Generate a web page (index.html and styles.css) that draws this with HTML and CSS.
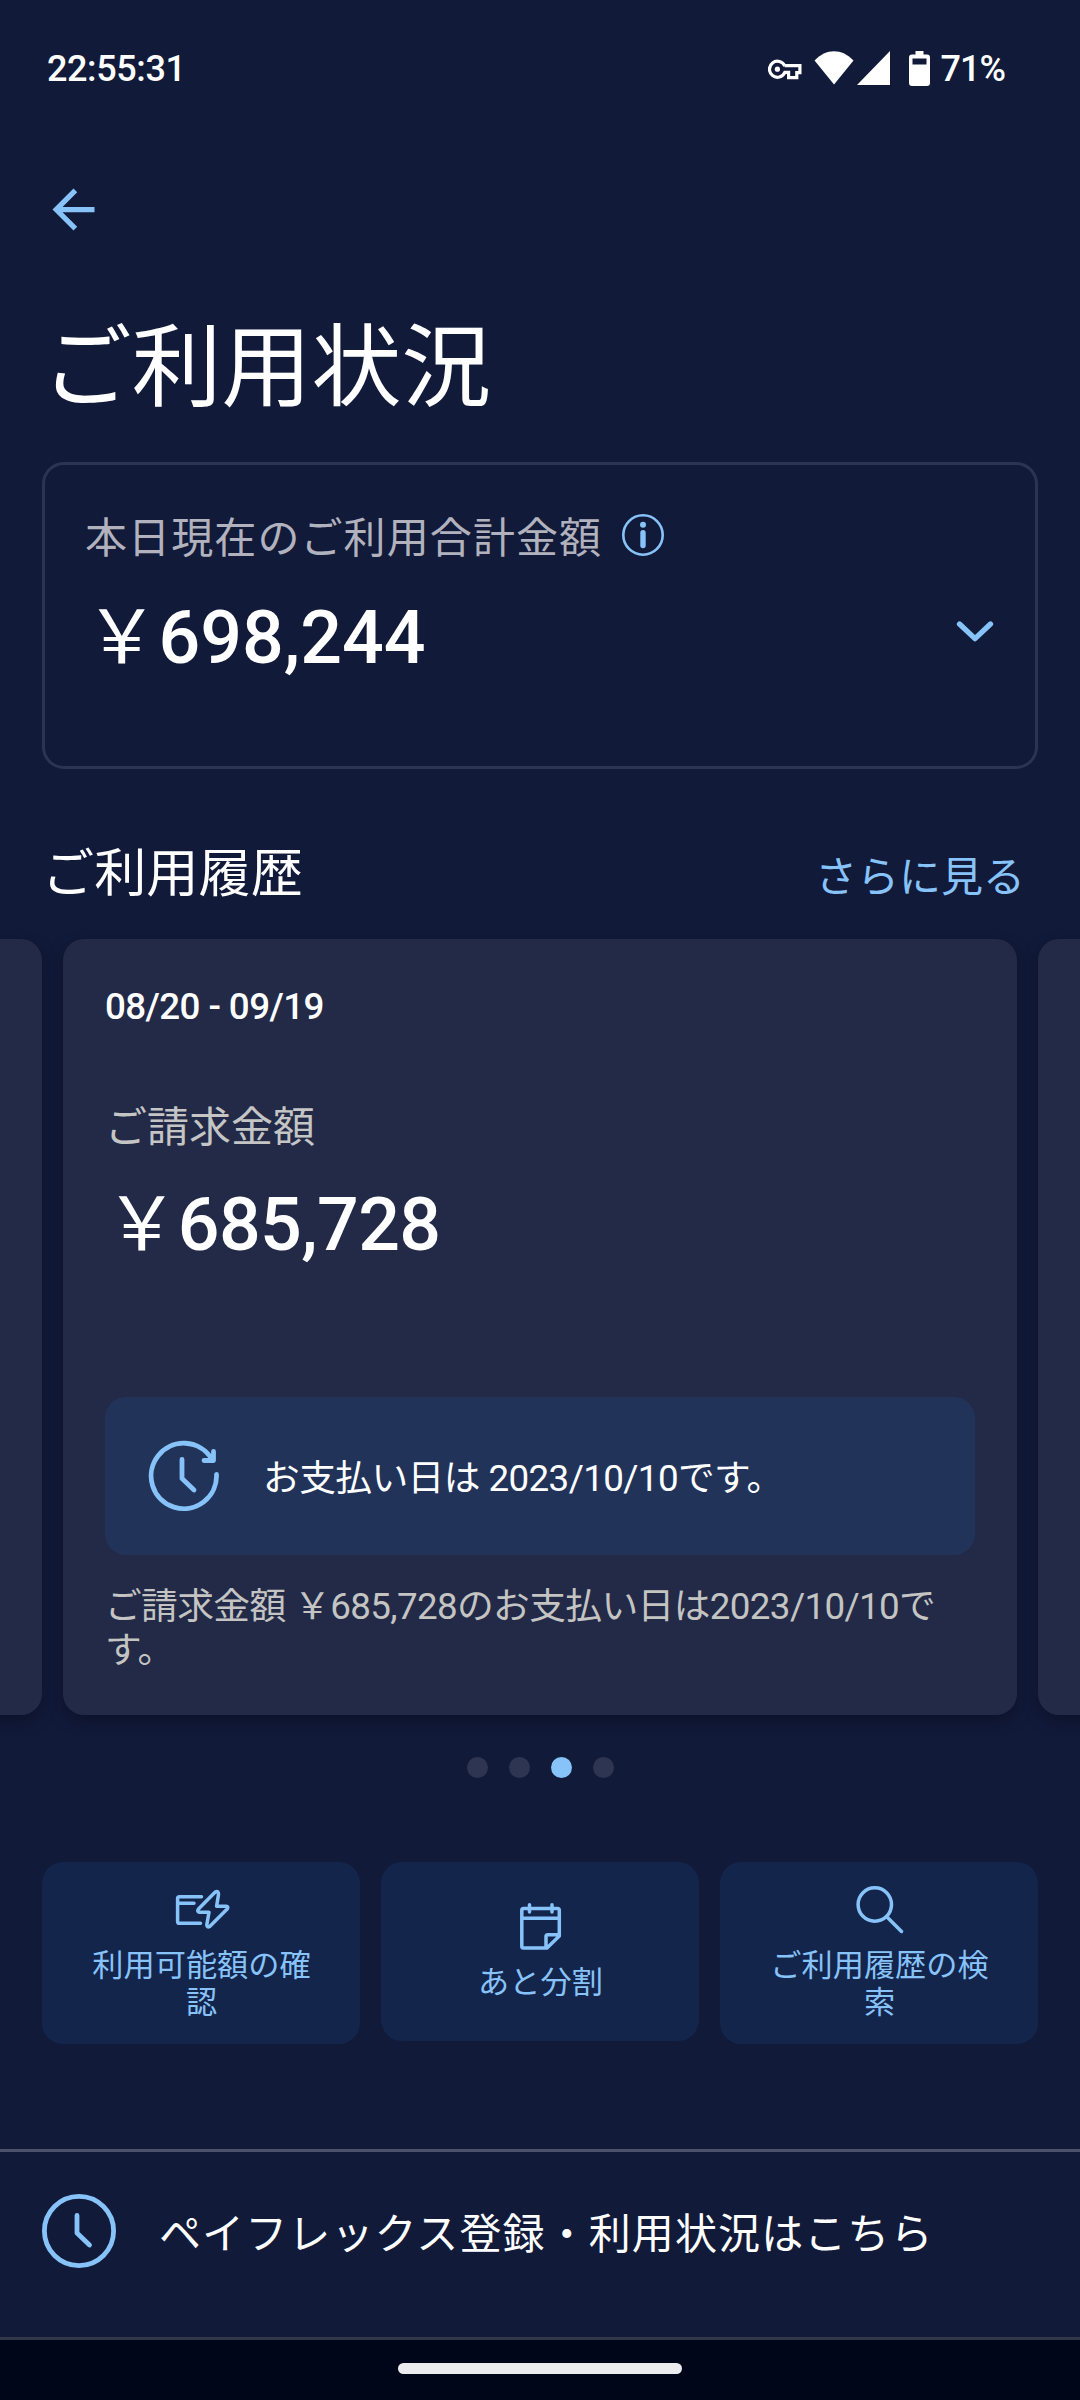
FILE: index.html
```html
<!DOCTYPE html>
<html lang="ja">
<head>
<meta charset="utf-8">
<title>ご利用状況</title>
<link rel="stylesheet" href="styles.css">
</head>
<body>
<div class="screen">
  <header class="status">
    <span class="time">22:55:31</span>
    <div class="status-icons">
      <svg class="key" width="34" height="21" viewBox="0 0 34 21" fill="none" stroke="#fff" stroke-width="3.2"><path d="M16.800 7.100A8 8 0 1 0 16.800 13.400H20.600V18.600H28.800V13.600H31.900V6.600H16.600"/><path d="M24.600 9V15.500" stroke-width="2.600" stroke="#111a39"/><circle cx="9.400" cy="10.200" r="2.600" fill="#fff" stroke="none"/></svg>
      <svg class="wifi" width="40" height="34" viewBox="0 0 40 34"><path d="M20 33.5 .5 9.5C12-3 28-3 39.500 9.500Z" fill="#fff"/></svg>
      <svg class="signal" width="33" height="34" viewBox="0 0 33 34"><path d="M33 0V34H0Z" fill="#fff"/></svg>
      <svg class="battery" width="21" height="35" viewBox="0 0 21 35"><path fill-rule="evenodd" d="M6.500 0h8v3.500H18a3 3 0 0 1 3 3V32a3 3 0 0 1-3 3H3a3 3 0 0 1-3-3V6.500a3 3 0 0 1 3-3h3.500ZM3.500 7.500V13.500h14V7.500Z" fill="#fff"/></svg>
      <span class="percent">71%</span>
    </div>
  </header>
  <nav class="topbar">
    <svg width="63" height="63" viewBox="0 0 24 24"><path d="M20 11H7.830l5.590-5.590L12 4l-8 8 8 8 1.410-1.410L7.830 13H20v-2z" fill="#87c3f9"/></svg>
  </nav>
  <h1 class="title">ご利用状況</h1>

  <section class="summary">
    <div class="summary-main">
      <div class="summary-label"><span>本日現在のご利用合計金額</span>
        <svg width="42" height="42" viewBox="0 0 42 42"><circle cx="21" cy="21" r="19.700" fill="none" stroke="#87c3f9" stroke-width="2.600"/><circle cx="21" cy="10.800" r="3" fill="#87c3f9"/><path d="M21 18.800V31.500" stroke="#87c3f9" stroke-width="5.400" stroke-linecap="round"/></svg>
      </div>
      <div class="amount"><span class="yen">￥</span>698,244</div>
    </div>
    <svg class="chevron" width="38" height="24" viewBox="0 0 38 24"><path d="M3.500 4 19 18.700 34.500 4" fill="none" stroke="#87c3f9" stroke-width="5.300" stroke-linecap="round" stroke-linejoin="round"/></svg>
  </section>

  <div class="section-head">
    <h2>ご利用履歴</h2>
    <a class="more">さらに見る</a>
  </div>

  <div class="carousel">
    <div class="card side"></div>
    <article class="card main">
      <div class="period">08/20 - 09/19</div>
      <div class="bill-label">ご請求金額</div>
      <div class="amount"><span class="yen">￥</span>685,728</div>
      <div class="notice">
        <svg width="72" height="72" viewBox="0 0 72 72" fill="none" stroke="#87c3f9" stroke-width="4.800" stroke-linecap="round" stroke-linejoin="round"><path d="M68.500 34.500A32.700 32.700 0 1 1 63.500 18.500"/><path d="M65.500 11.500V20.500H56"/><path d="M34 19.500V38.500L46 50"/></svg>
        <span>お支払い日は 2023/10/10です。</span>
      </div>
      <p class="note">ご請求金額 ￥685,728のお支払い日は2023/10/10です。</p>
    </article>
    <div class="card side"></div>
  </div>

  <div class="dots"><i></i><i></i><i class="on"></i><i></i></div>

  <div class="actions">
    <a class="tile">
      <svg width="56" height="48" viewBox="0 0 56 48" fill="none" stroke="#87c3f9" stroke-width="3.500" stroke-linecap="round" stroke-linejoin="round"><path d="M27.500 10.700H5.500Q3.600 10.700 3.600 12.600V35.400Q3.600 37.300 5.500 37.300H26.500M5 17.300H20"/><path d="M41.500 5.800 24.500 23Q22.600 25.700 25.300 26.300H35L32.800 38.800Q33 42 35.700 40.500L53.200 23Q54.800 20.400 52 20.200H42.600L44.500 8.500Q44.500 4.500 41.500 5.800Z"/></svg>
      <span>利用可能額の確認</span>
    </a>
    <a class="tile short">
      <svg width="42" height="48" viewBox="0 0 42 48" fill="none" stroke="#87c3f9" stroke-width="3.500" stroke-linecap="round" stroke-linejoin="round"><path d="M27 45H3.500Q1.800 45 1.800 43.200V7.300Q1.800 5.500 3.500 5.500H37.500Q39.300 5.500 39.300 7.300V33L27 45ZM1.800 15.300H39.300M26 44V33.500Q26 31.700 27.800 31.700H38.500M9.500 1.800V9M32 1.800V9"/></svg>
      <span>あと分割</span>
    </a>
    <a class="tile">
      <svg width="48" height="48" viewBox="0 0 48 48" fill="none" stroke="#87c3f9" stroke-width="3.500" stroke-linecap="round"><circle cx="18.800" cy="18.500" r="16.700"/><path d="M31 31 45.500 45.500"/></svg>
      <span>ご利用履歴の検索</span>
    </a>
  </div>

  <footer class="banner">
    <svg width="74" height="74" viewBox="0 0 74 74" fill="none" stroke="#87c3f9" stroke-width="4.800" stroke-linecap="round" stroke-linejoin="round"><circle cx="37" cy="37" r="34.600"/><path d="M35 21.500V39L47.500 51"/></svg>
    <span>ペイフレックス登録・利用状況はこちら</span>
  </footer>
  <div class="gesture"><i></i></div>
</div>
</body>
</html>
```
FILE: styles.css
```css
* { box-sizing: border-box; margin: 0; padding: 0; }
body {
  width: 1080px;
  background: #111a39;
  color: #fff;
  font-family: Roboto, "Noto Sans CJK JP", sans-serif;
}
svg { display: block; flex: none; }
.screen { width: 1080px; height: 2400px; overflow: hidden; display: flex; flex-direction: column; }
.screen > * { flex: none; }

.status { height: 178px; padding: 46px 75px 0 47px; display: flex; justify-content: space-between; align-items: flex-start; }
.time, .percent { font-size: 36px; font-weight: 500; line-height: 46px; letter-spacing: -0.4px; }
.percent { letter-spacing: -1px; }
.status-icons { display: flex; align-items: flex-start; }
.key { margin: 13px 12px 0 0; }
.wifi { margin: 5px 3px 0 0; }
.signal { margin: 5px 19px 0 0; }
.battery { margin: 5px 11px 0 0; }

.topbar { height: 124px; padding-left: 42px; }
.title { height: 160px; padding-left: 42px; font-size: 89.800px; font-weight: 400; line-height: 133px; }

.summary {
  height: 307px; margin: 0 42px;
  border: 3px solid #2c3452; border-radius: 22px;
  padding: 45px 41px 0 40px;
  display: flex; justify-content: space-between;
}
.summary-label { display: flex; gap: 20px; height: 58px; font-size: 42px; line-height: 58px; letter-spacing: 1.1px; color: #b1b2bd; }
.summary-label svg { margin-top: 4px; }
.amount { font-size: 73.5px; font-weight: 500; line-height: 86px; }
.summary .amount { margin-top: 27px; }
.yen { font-weight: 400; }
.chevron { margin-top: 110px; }

.section-head { height: 170px; padding: 66px 55px 0 42px; display: flex; justify-content: space-between; }
.section-head h2 { font-size: 52.200px; font-weight: 400; line-height: 80px; }
.more { font-size: 42px; line-height: 85px; color: #87c3f9; }

.carousel { height: 776px; display: flex; justify-content: center; gap: 21px; }
.card { flex: none; width: 954px; border-radius: 21px; background: #222a48; box-shadow: 0 6px 14px rgba(8, 12, 30, .5); }
.main { padding: 0 42px; }
.period { padding-top: 44px; font-size: 36.750px; font-weight: 500; line-height: 48px; letter-spacing: -0.600px; }
.bill-label { margin-top: 67px; font-size: 42px; line-height: 60px; color: #c5c5c5; }
.main .amount { margin-top: 24px; letter-spacing: -0.650px; }
.notice { margin-top: 129px; height: 158px; border-radius: 21px; background: #22335a; padding-left: 43px; display: flex; align-items: center; gap: 43px; font-size: 36.750px; line-height: 48px; letter-spacing: -0.600px; }
.notice span { padding-top: 6px; }
.note { margin-top: 30px; font-size: 36.750px; line-height: 43.500px; letter-spacing: -0.630px; color: #c4c4c2; }

.dots { height: 147px; padding-top: 42px; display: flex; justify-content: center; gap: 21px; }
.dots i { width: 21px; height: 21px; border-radius: 50%; background: #2e3552; }
.dots .on { background: #87c3f9; }

.actions { height: 287px; padding: 0 42px; display: grid; grid-template-columns: repeat(3, 318px); gap: 21px; align-items: start; }
.tile { height: 182px; border-radius: 21px; background: #14254c; color: #87c3f9; padding: 24px 42px 0 43px; display: flex; flex-direction: column; align-items: center; font-size: 31.200px; line-height: 37px; text-align: center; }
.tile span { margin-top: 13px; }
.short { height: 179px; padding-top: 41px; }

.banner { height: 191px; border-top: 3px solid #4c526b; border-bottom: 3px solid #333849; padding: 42px 42px 0; display: flex; gap: 43px; font-size: 42px; line-height: 81px; letter-spacing: 1.1px; }
.gesture { flex: 1; background: #000619; display: flex; justify-content: center; padding-top: 23px; }
.gesture i { width: 284px; height: 11px; border-radius: 6px; background: #ececef; }
```
